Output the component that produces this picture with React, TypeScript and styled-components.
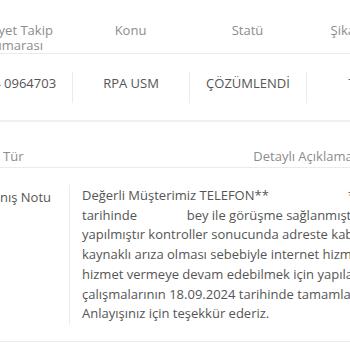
import * as React from 'react';
import styled, { createGlobalStyle } from 'styled-components';

const TEXT = '#555555';
const MUTED = '#8c8c8c';
const LINE = '#ebebeb';

const GlobalStyle = createGlobalStyle`
  html, body {
    margin: 0;
    padding: 0;
    background: #ffffff;
    overflow: hidden;
  }
  body {
    font-family: 'Open Sans', 'Noto Sans', sans-serif;
    font-size: 13px;
    color: ${TEXT};
  }
`;

const Page = styled.div`
  width: 350px;
  height: 350px;
  overflow: hidden;
`;

const Track = styled.div`
  margin-left: -45px;
  width: 640px;
`;

const Card = styled.section<{ $shadow?: boolean }>`
  border-bottom: ${(p) => (p.$shadow ? '2px solid #f0f0f0' : `1px solid ${LINE}`)};
`;

const Grid = styled.div<{ $cols: string }>`
  display: grid;
  grid-template-columns: ${(p) => p.$cols};
`;

const HeadRow = styled(Grid)<{ $height: number; $end?: boolean }>`
  box-sizing: border-box;
  height: ${(p) => p.$height}px;
  border-bottom: 1px solid ${LINE};
  align-items: ${(p) => (p.$end ? 'end' : 'start')};
  padding: ${(p) => (p.$end ? '0 0 1px' : '23px 0 0')};
`;

const HeadCell = styled.div<{ $align?: string }>`
  color: ${MUTED};
  line-height: 15px;
  text-align: ${(p) => p.$align || 'center'};
  padding: 0 ${(p) => (p.$align === 'left' ? '48px' : '0')};
  white-space: nowrap;
`;

const TallHead = styled(HeadCell)`
  line-height: 20px;
`;

const BodyRow = styled(Grid)<{ $pad: string }>`
  padding: ${(p) => p.$pad};
  align-items: start;
`;

const Cell = styled.div<{ $divider?: boolean }>`
  box-sizing: border-box;
  min-height: 31px;
  line-height: 22px;
  text-align: center;
  border-left: ${(p) => (p.$divider ? `1px solid ${LINE}` : 'none')};
  white-space: nowrap;
`;

const Label = styled.div`
  line-height: 20px;
  text-align: right;
  padding-right: 18px;
  margin-top: 2px;
  white-space: nowrap;
`;

const Note = styled.p`
  margin: 0;
  padding: 1px 0 1px 12px;
  border-left: 1px solid ${LINE};
  line-height: 19.7px;
  white-space: nowrap;
`;

const Gap = styled.span<{ $w: number }>`
  display: inline-block;
  width: ${(p) => p.$w}px;
`;

export default function App() {
  return (
    <Page>
      <GlobalStyle />
      <Track>
        <Card $shadow>
          <HeadRow $cols="117px 117px 117px 117px" $height={54}>
            <HeadCell>
              Şikayet Takip
              <br />
              Numarası
            </HeadCell>
            <HeadCell>Konu</HeadCell>
            <HeadCell>Statü</HeadCell>
            <HeadCell>Şikayet Tipi</HeadCell>
          </HeadRow>
          <BodyRow $cols="117px 117px 117px 117px" $pad="18px 0 17px">
            <Cell>2024 0964703</Cell>
            <Cell $divider>RPA USM</Cell>
            <Cell $divider>ÇÖZÜMLENDİ</Cell>
            <Cell $divider>Talep</Cell>
          </BodyRow>
        </Card>
        <Card>
          <HeadRow $cols="114px 468px" $height={46} $end>
            <TallHead $align="left">Tür</TallHead>
            <TallHead>Detaylı Açıklama</TallHead>
          </HeadRow>
          <BodyRow $cols="114px 468px" $pad="17px 0 16px">
            <Label>Kapanış Notu</Label>
            <Note>
              Değerli Müşterimiz TELEFON**
              <Gap $w={79} />*
              <br />
              tarihinde <Gap $w={43} /> bey ile görüşme sağlanmıştır. Yerinde
              <br />
              yapılmıştır kontroller sonucunda adreste kablo
              <br />
              kaynaklı arıza olması sebebiyle internet hizmetinin
              <br />
              hizmet vermeye devam edebilmek için yapılan
              <br />
              çalışmalarının 18.09.2024 tarihinde tamamlandığı
              <br />
              Anlayışınız için teşekkür ederiz.
            </Note>
          </BodyRow>
        </Card>
      </Track>
    </Page>
  );
}
